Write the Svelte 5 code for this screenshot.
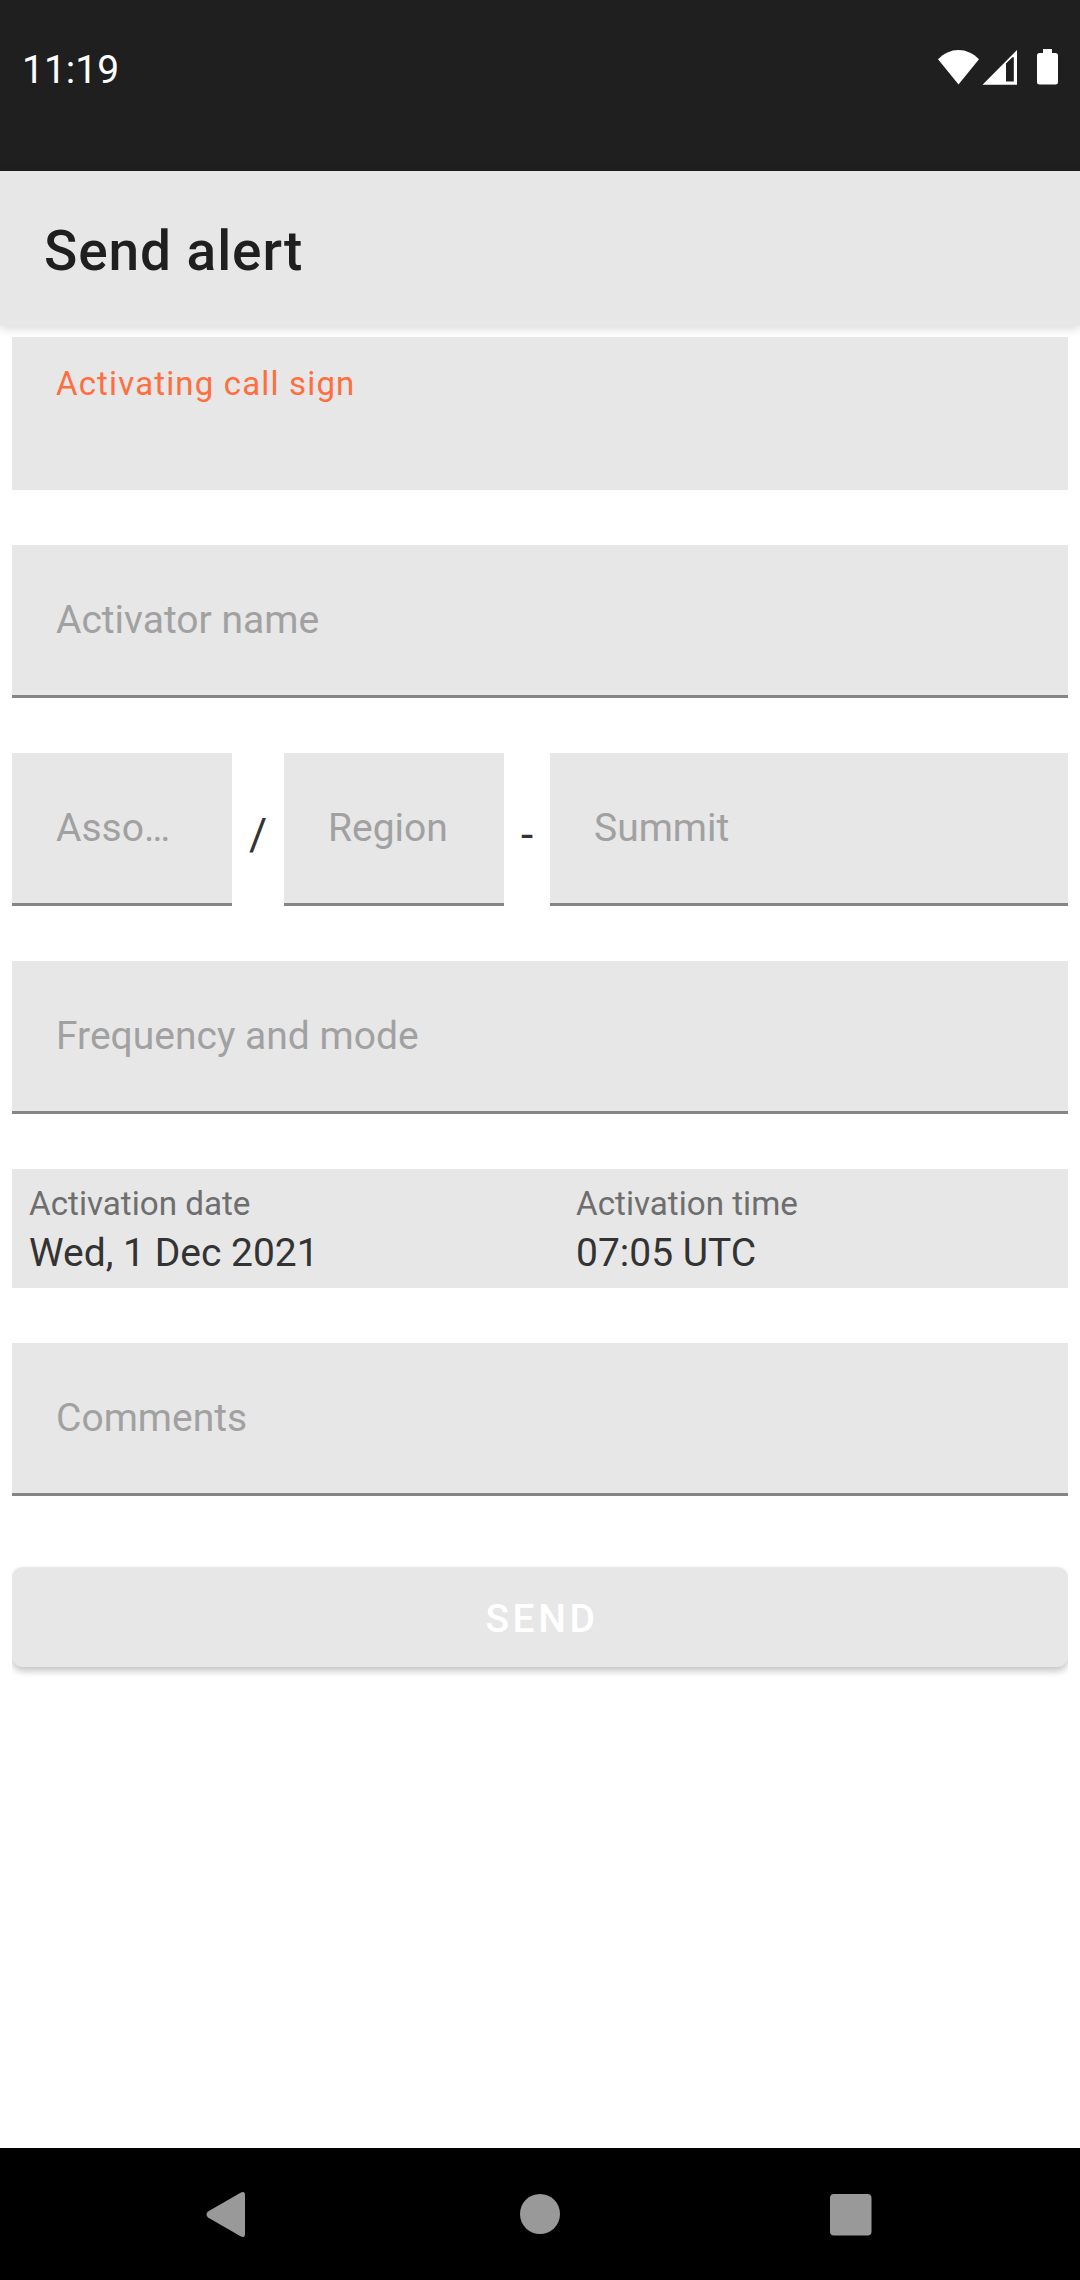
<script>
    let callsign = $state('');
    let name = $state('');
    let association = $state('');
    let region = $state('');
    let summit = $state('');
    let frequency = $state('');
    let comments = $state('');

    let schedule = [
        { label: 'Activation date', value: 'Wed, 1 Dec 2021' },
        { label: 'Activation time', value: '07:05 UTC' },
    ];
</script>

<div class="screen">
    <div class="status">
        <span class="clock">11:19</span>
        <svg width="122" height="38" viewBox="0 0 122 38" fill="#fff">
            <path d="M0 11.3C5.8 5.4 12.7 2 20.5 2s14.700 3.400 20.500 9.300L20.500 36.500z" />
            <path fill-rule="evenodd" d="M44.500 36.700L79 2v34.700zM68 15.500v17.900h7.800V10.500c0-1.500-.7-1.900-1.700-.9z" />
            <path d="M105 1h9v4h3.500a2.500 2.500 0 0 1 2.500 2.500v26.500a2.500 2.500 0 0 1-2.500 2.500h-16a2.500 2.500 0 0 1-2.500-2.500V7.500a2.500 2.500 0 0 1 2.500-2.500h3.500z" />
        </svg>
    </div>

    <header>
        <h1>Send alert</h1>
    </header>

    <main>
        <label class="field focused">
            <span>Activating call sign</span>
            <input bind:value={callsign} />
        </label>

        <input class="field" placeholder="Activator name" bind:value={name} />

        <div class="reference">
            <input class="field" placeholder="Association" bind:value={association} />
            <span class="separator">/</span>
            <input class="field" placeholder="Region" bind:value={region} />
            <span class="separator">-</span>
            <input class="field" placeholder="Summit" bind:value={summit} />
        </div>

        <input class="field" placeholder="Frequency and mode" bind:value={frequency} />

        <div class="schedule">
            {#each schedule as item}
                <div class="item">
                    <span class="label">{item.label}</span>
                    <span class="value">{item.value}</span>
                </div>
            {/each}
        </div>

        <input class="field" placeholder="Comments" bind:value={comments} />

        <div class="actions">
            <button disabled>SEND</button>
        </div>
    </main>

    <nav>
        <svg width="1080" height="132" viewBox="0 0 1080 132" fill="#999">
            <path d="M208 63.500L240.500 44.800Q245 42.500 245 47v39Q245 90.500 240.500 88.200L208 69.500Q205 66.500 208 63.500z" />
            <circle cx="540" cy="66" r="20" />
            <rect x="830" y="46" width="41.500" height="41.500" rx="4" />
        </svg>
    </nav>
</div>

<style>
    :global(body) {
    background: #fff;
    font-family: Roboto, sans-serif;
    }

    .screen {
    width: 1080px;
    height: 2280px;
    display: flex;
    flex-direction: column;
    overflow: hidden;
    }

    .status {
    flex: none;
    box-sizing: border-box;
    height: 171px;
    padding: 48px 20px 0 22px;
    display: flex;
    justify-content: space-between;
    align-items: flex-start;
    background: #1f1f1f;
    color: #fff;
    }

    .clock {
    font-size: 39px;
    line-height: 45px;
    }

    header {
    flex: none;
    position: relative;
    z-index: 1;
    box-sizing: border-box;
    height: 155px;
    padding: 5px 44px 0;
    display: flex;
    align-items: center;
    background: #e7e7e7;
    box-shadow: 0 3px 9px rgba(0, 0, 0, 0.14);
    }

    h1 {
    margin: 0;
    color: #1f1f1f;
    font-size: 55px;
    font-weight: 500;
    letter-spacing: 0.0165em;
    }

    main {
    flex: 1;
    display: flex;
    flex-direction: column;
    gap: 55px;
    padding: 11px 12px 0;
    }

    input {
    min-width: 0;
    border: none;
    outline: none;
    border-radius: 0;
    background: none;
    color: #333;
    font: 39px Roboto, sans-serif;
    text-overflow: ellipsis;
    }

    input::placeholder {
    color: #a1a1a1;
    opacity: 1;
    }

    .field {
    flex: none;
    box-sizing: border-box;
    height: 153px;
    padding: 0 44px;
    background: #e7e7e7;
    border-bottom: 3px solid #858585;
    }

    .focused {
    display: flex;
    flex-direction: column;
    padding-top: 27px;
    border-bottom: none;
    }

    .focused span {
    color: #ff6e40;
    font-size: 33px;
    line-height: 40px;
    letter-spacing: 0.035em;
    }

    .focused input {
    padding: 0;
    height: 60px;
    }

    .reference {
    display: grid;
    grid-template-columns: 220px 52px 220px 46px 1fr;
    color: #333;
    font-size: 44px;
    line-height: 52px;
    align-items: center;
    text-align: center;
    }

    .separator {
    padding-top: 10px;
    }

    .schedule {
    box-sizing: border-box;
    height: 119px;
    padding: 15px 17px 0;
    display: grid;
    grid-template-columns: 547px 1fr;
    background: #e7e7e7;
    }

    .item {
    display: flex;
    flex-direction: column;
    gap: 8px;
    }

    .label {
    color: #6e6e6e;
    font-size: 33.2px;
    line-height: 39px;
    }

    .value {
    color: #333;
    font-size: 39px;
    line-height: 45px;
    }

    .actions {
    margin: 8px 0 0;
    padding: 8px 0 16px;
    overflow: hidden;
    }

    button {
    display: block;
    width: 100%;
    height: 100px;
    padding: 4px 0 0 4px;
    border: none;
    border-radius: 11px;
    background: #e7e7e7;
    color: #fff;
    font: 500 39px Roboto, sans-serif;
    letter-spacing: 0.092em;
    box-shadow: 0 4px 7px rgba(0, 0, 0, 0.24);
    }

    nav {
    flex: none;
    height: 132px;
    background: #000;
    }

    nav svg {
    display: block;
    }
</style>
